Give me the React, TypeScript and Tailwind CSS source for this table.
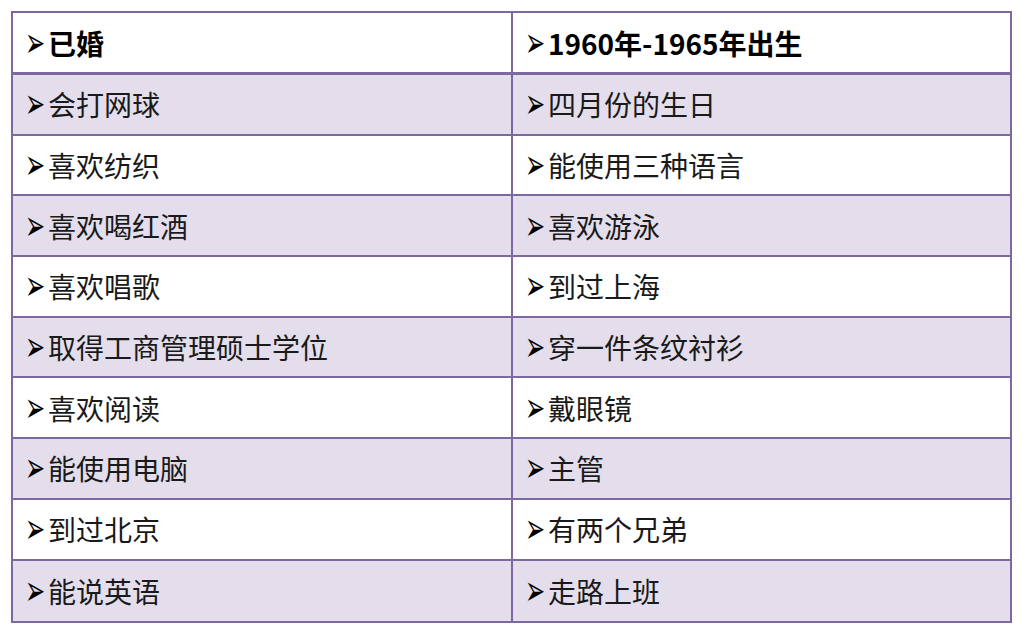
import React from 'react';

const rows: [string, string][] = [
  ['会打网球', '四月份的生日'],
  ['喜欢纺织', '能使用三种语言'],
  ['喜欢喝红酒', '喜欢游泳'],
  ['喜欢唱歌', '到过上海'],
  ['取得工商管理硕士学位', '穿一件条纹衬衫'],
  ['喜欢阅读', '戴眼镜'],
  ['能使用电脑', '主管'],
  ['到过北京', '有两个兄弟'],
  ['能说英语', '走路上班'],
];

const font = { fontFamily: '"Noto Sans CJK SC", "Liberation Sans", sans-serif' };

function Cell({ text, bold }: { text: string; bold?: boolean }) {
  return (
    <div className="flex items-center pl-[12px] h-full">
      <span
        className="inline-block w-[23px] shrink-0 text-[24px] leading-none text-black scale-y-175 origin-center"
        style={{ fontFamily: '"DejaVu Sans", sans-serif' }}
      >
        ➢
      </span>
      <span
        className={`text-[28px] leading-none ${bold ? 'font-bold text-black' : 'font-normal text-[#1a1a1a]'}`}
        style={font}
      >
        {text}
      </span>
    </div>
  );
}

export default function App() {
  return (
    <div className="w-[1024px] h-[635px] bg-white pt-[11px] pl-[11px]">
      <div className="w-[1001px] border-2 border-[#7d68a0]">
        <div className="grid grid-cols-[498px_2px_497px] h-[62px] border-b-[3px] border-[#7d68a0] bg-white">
          <Cell text="已婚" bold />
          <div className="bg-[#7d68a0]" />
          <Cell text="1960年-1965年出生" bold />
        </div>
        {rows.map(([a, b], i) => (
          <div
            key={i}
            className={`grid grid-cols-[498px_2px_497px] h-[60.7px] ${i < rows.length - 1 ? 'border-b-2 border-[#7d68a0]' : ''} ${i % 2 === 0 ? 'bg-[#e4deec]' : 'bg-white'}`}
          >
            <Cell text={a} />
            <div className="bg-[#7d68a0]" />
            <Cell text={b} />
          </div>
        ))}
      </div>
    </div>
  );
}
